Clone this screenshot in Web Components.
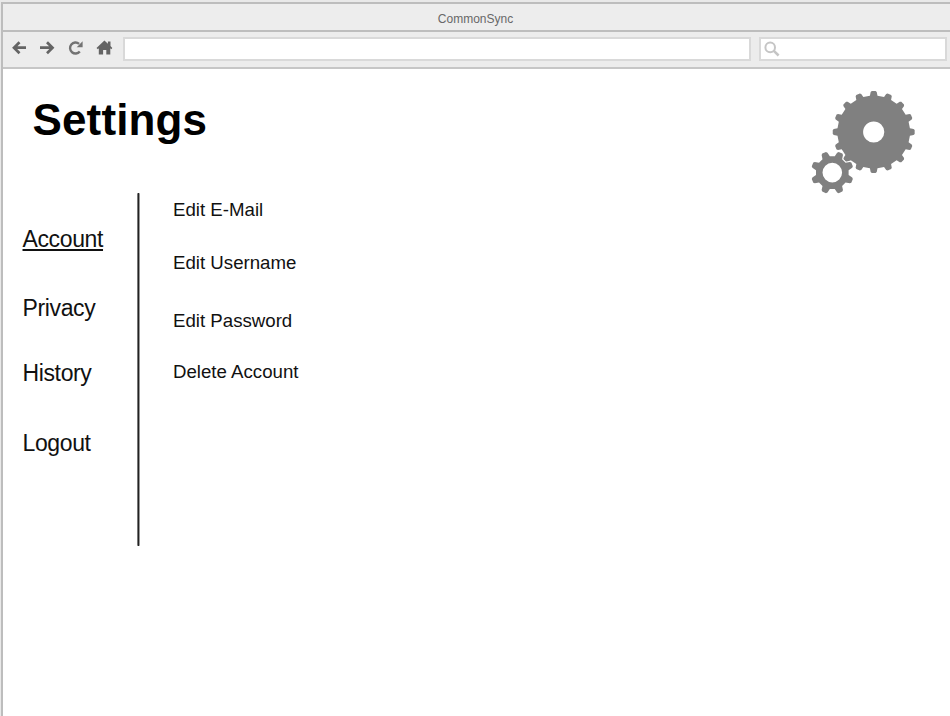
<!DOCTYPE html>
<html lang="en"><head><meta charset="utf-8"><title>CommonSync</title>
<style>html,body{margin:0;height:100%;overflow:hidden;background:#fff}body{font-family:"Liberation Sans",Arial,sans-serif;color:#111}</style>
</head><body>
<browser-window label="CommonSync">
  <settings-page heading="Settings">
    <gear-art slot="art"></gear-art>
    <menu-item slot="nav" active>Account</menu-item>
    <menu-item slot="nav" style="--gap:45px">Privacy</menu-item>
    <menu-item slot="nav" style="--gap:41px">History</menu-item>
    <menu-item slot="nav" style="--gap:46px">Logout</menu-item>
    <setting-action>Edit E-Mail</setting-action>
    <setting-action style="--gap:33px">Edit Username</setting-action>
    <setting-action style="--gap:38px">Edit Password</setting-action>
    <setting-action style="--gap:31px">Delete Account</setting-action>
  </settings-page>
</browser-window>
<script>
const define = (name, html, setup) => customElements.define(name, class extends HTMLElement {
  constructor() {
    super();
    this.attachShadow({mode: 'open'}).innerHTML = html;
    if (setup) setup(this, this.shadowRoot);
  }
});

define('tool-bar', `<style>
:host{display:flex;box-sizing:border-box;height:35px;padding:5px 3px 0 9px;background:#ececec}
svg{display:block;flex:none}
.field{box-sizing:border-box;height:24px;border:2px solid #d9d9d9;background:#fff;flex:none}
.url{width:628px;margin-left:5px}
.search{width:188px;margin-left:8px;padding:2px 0 0 3px}
</style>
<svg width="106" height="24" viewBox="12 37 106 24" fill="none" stroke="#646464" stroke-width="2.7">
<path d="M26 47.7H14.5M19.5 42.2L14 47.7l5.5 5.5"/>
<path d="M40 47.7h12M47 42.2l5.5 5.5-5.5 5.5"/>
<path stroke="#737373" stroke-width="2.4" d="M79.8 51.5A5.5 5.5 0 1 1 79.1 43.8"/><path fill="#737373" stroke="none" d="M82.6 41.3v5.9h-5.9z"/>
<path fill="#646464" stroke="none" d="M104.4 40.4l3.5 3.3v-2.2h2.6v4.4l1.8 2-1 1.3-1-.9v6.2h-4v-4.5h-3.2v4.5h-4.3v-6.2l-1 .9-1.3-1.3z"/>
</svg>
<div class="field url"></div>
<div class="field search"><svg width="17" height="17" fill="none" stroke="#c5c5c5"><circle cx="6.2" cy="6.4" r="4.8" stroke-width="2"/><path stroke-width="2.5" d="M9.8 9.8l4.8 4.7"/></svg></div>`);

define('browser-window', `<style>
:host{display:block;box-sizing:border-box;height:716px;padding:2px 0 0 1px;background:#e9e9e9}
.frame{box-sizing:border-box;height:714px;border:solid #bdbdbd;border-width:2px 0 0 2px;background:#fff}
.title{box-sizing:border-box;height:28px;background:#ededed;border-bottom:2px solid #bdbdbd;color:#686868;font-size:12px;line-height:30px;text-align:center;padding-right:2px}
tool-bar{height:37px;border-bottom:2px solid #c6c6c6}
</style><div class="frame"><div class="title"></div><tool-bar></tool-bar><slot></slot></div>`,
(host, root) => root.querySelector('.title').textContent = host.getAttribute('label'));

define('settings-page', `<style>
:host{display:block}
header{display:flex;justify-content:space-between;height:124px}
h1{margin:26px 0 0 29.5px;font-size:44px;line-height:50px;height:50px;color:#000;letter-spacing:.14px}
.body{display:flex}
nav{width:114.5px;padding:34px 0 0 19.5px;flex:none}
.rule{width:3px;height:353px;background:linear-gradient(90deg,#777 0 1px,#222 1px 2px,#999 2px);border-radius:1px}
main{padding:7px 0 0 33px}
</style><header><h1></h1><slot name="art"></slot></header>
<div class="body"><nav><slot name="nav"></slot></nav><div class="rule"></div><main><slot></slot></main></div>`,
(host, root) => root.querySelector('h1').textContent = host.getAttribute('heading'));

define('menu-item', `<style>
:host{display:block;margin-top:var(--gap,0);height:24px;font-size:23px;line-height:24px;letter-spacing:-.37px;white-space:nowrap}
:host([active]){text-decoration:underline;text-decoration-thickness:1.5px;text-underline-offset:2px}
</style><slot></slot>`);

define('setting-action', `<style>
:host{display:block;margin-top:var(--gap,0);height:20px;font-size:18.67px;line-height:20px;white-space:nowrap}
</style><slot></slot>`);

const gear = (cx, cy, teeth, inner, outer, hole, half, phase) => {
  const pts = [];
  for (let i = 0; i < teeth; i++) {
    const a = (i + phase) * 2 * Math.PI / teeth;
    for (const [r, w] of [[inner, -half], [outer - 1, -half * .8], [outer, -half * .5], [outer, half * .5], [outer - 1, half * .8], [inner, half]]) {
      const t = a + w / r;
      pts.push((cx + r * Math.sin(t)).toFixed(2) + ' ' + (cy - r * Math.cos(t)).toFixed(2));
    }
  }
  return `M${pts.join('L')}ZM${cx - hole} ${cy}a${hole} ${hole} 0 1 0 ${2 * hole} 0a${hole} ${hole} 0 1 0 ${-2 * hole} 0Z`;
};
define('gear-art', `<style>:host{display:block;margin:21px 33px 0 0;height:103px}svg{display:block}</style>
<svg width="107" height="107" viewBox="810 90 107 107" fill="#808080" fill-rule="evenodd">
<path d="${gear(873.7, 132, 16, 36.4, 41, 10.6, 3.8, 0)}"/>
<path d="${gear(832.3, 172.6, 8, 16.5, 21.5, 9.8, 4, .5)}" stroke="#fff" stroke-width="2" paint-order="stroke"/>
</svg>`);
</script></body></html>
